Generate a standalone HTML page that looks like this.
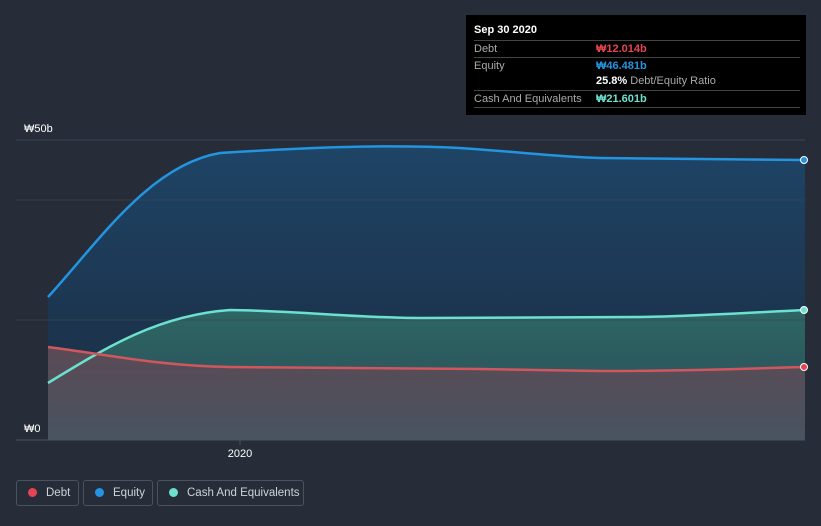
<!DOCTYPE html><html><head><style>
html,body{margin:0;width:821px;height:526px;background:#262d39;font-family:"Liberation Sans",sans-serif;overflow:hidden;position:relative}
.tt{position:absolute;left:466px;top:15px;width:340px;height:100px;background:#000;color:#fff;font-size:11px}
.tt .r{position:absolute;left:8px;width:326px;border-top:1px solid #444;height:16px;line-height:16px}
.tt .l{color:#aaa}.tt .v{position:absolute;left:122px;font-weight:bold}
.lg{position:absolute;top:480px;height:26px;border:1px solid #4a525e;border-radius:3px;color:#cfd3d8;font-size:11.5px;line-height:24px;box-sizing:border-box;white-space:nowrap}
.lg i{display:inline-block;width:9px;height:9px;border-radius:50%;margin:0 9px 0 11px;vertical-align:-1px}
</style></head><body>
<svg width="821" height="526" style="position:absolute;left:0;top:0">
<defs><linearGradient id="g" x1="0" y1="0" x2="0" y2="1"><stop offset="0" stop-color="#1e4466"/><stop offset="1" stop-color="#1b2b40"/></linearGradient>
<linearGradient id="c" x1="0" y1="0" x2="0" y2="1"><stop offset="0" stop-color="#2d6664"/><stop offset="1" stop-color="#2b4a56"/></linearGradient>
<linearGradient id="d" x1="0" y1="0" x2="0" y2="1"><stop offset="0" stop-color="#5a4a55"/><stop offset="1" stop-color="#485460"/></linearGradient></defs>
<path d="M48,297 C100,240 150,165 220,153 C300,148 380,144 460,148 C520,152 560,157 600,158 L805,160 L805,440 L48,440Z" fill="url(#g)"/>
<path d="M48,383 C110,345 160,315 230,310 C300,311 360,318 420,318 L640,317 C700,316 760,312 805,310 L805,440 L48,440Z" fill="url(#c)"/>
<path d="M48,347 C110,355 160,366 230,367 L480,369 L600,371 C700,371 760,368 805,367 L805,440 L48,440Z" fill="url(#d)"/>
<line x1="16" y1="140" x2="805" y2="140" stroke="#3c4553"/><line x1="16" y1="200" x2="805" y2="200" stroke="#3c4553" opacity=".6"/><line x1="16" y1="320" x2="805" y2="320" stroke="#3c4553" opacity=".6"/>
<line x1="16" y1="440" x2="805" y2="440" stroke="#4a525e"/><line x1="240" y1="440" x2="240" y2="445" stroke="#4a525e"/>
<path d="M48,297 C100,240 150,165 220,153 C300,148 380,144 460,148 C520,152 560,157 600,158 L805,160" fill="none" stroke="#2394df" stroke-width="2.5"/>
<path d="M48,383 C110,345 160,315 230,310 C300,311 360,318 420,318 L640,317 C700,316 760,312 805,310" fill="none" stroke="#6de0cf" stroke-width="2.5"/>
<path d="M48,347 C110,355 160,366 230,367 L480,369 L600,371 C700,371 760,368 805,367" fill="none" stroke="#d1565e" stroke-width="2.5"/>
<circle cx="804" cy="160" r="3.5" fill="#2394df" stroke="#fff"/><circle cx="804" cy="310" r="3.5" fill="#6de0cf" stroke="#fff"/><circle cx="804" cy="367" r="3.5" fill="#e64452" stroke="#fff"/>
<rect x="16" y="420" width="32" height="19" fill="#262d39"/>
<text x="24" y="132" fill="#fff" font-size="11">₩50b</text><text x="24" y="432" fill="#fff" font-size="11">₩0</text>
<text x="240" y="457" fill="#fff" font-size="11" text-anchor="middle">2020</text>
</svg>
<div class="tt"><div style="position:absolute;left:8px;top:9px;font-weight:bold">Sep 30 2020</div>
<div class="r" style="top:25px"><span class="l">Debt</span><span class="v" style="color:#e64452">₩12.014b</span></div>
<div class="r" style="top:42px"><span class="l">Equity</span><span class="v" style="color:#2394df">₩46.481b</span></div>
<div class="r" style="top:58px;border:0"><span class="v">25.8% <span style="color:#aaa;font-weight:normal">Debt/Equity Ratio</span></span></div>
<div class="r" style="top:75px"><span class="l">Cash And Equivalents</span><span class="v" style="color:#6de0cf">₩21.601b</span></div>
<div class="r" style="top:92px;height:0"></div></div>
<div class="lg" style="left:16px;width:63px"><i style="background:#e64452"></i>Debt</div>
<div class="lg" style="left:83px;width:70px"><i style="background:#2394df"></i>Equity</div>
<div class="lg" style="left:157px;width:147px"><i style="background:#6de0cf"></i>Cash And Equivalents</div>
</body></html>
